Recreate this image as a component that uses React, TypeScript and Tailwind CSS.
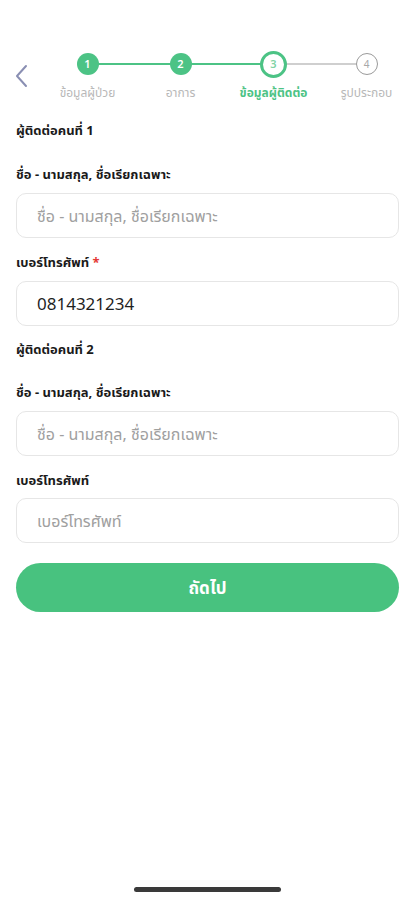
const font = { fontFamily: '"Noto Sans", "Noto Sans Thai", sans-serif' };

function Step({
  n,
  label,
  state,
  left,
  right,
}: {
  n: number;
  label: string;
  state: "done" | "active" | "todo";
  left?: "green" | "gray";
  right?: "green" | "gray";
}) {
  const lineColor = (c?: "green" | "gray") => (c === "green" ? "bg-[#4cc385]" : "bg-[#cfcfcf]");
  return (
    <div className="flex flex-col items-center">
      <div className="relative flex h-[28px] w-full items-center justify-center">
        {left && <div className={`absolute left-0 right-1/2 top-[13px] h-[2px] ${lineColor(left)}`} />}
        {right && <div className={`absolute left-1/2 right-0 top-[13px] h-[2px] ${lineColor(right)}`} />}
        {state === "done" && (
          <div className="relative z-10 flex h-[22px] w-[22px] items-center justify-center rounded-full bg-[#4cc385] text-[11px] font-semibold text-white">
            {n}
          </div>
        )}
        {state === "active" && (
          <div className="relative z-10 flex h-[27px] w-[27px] items-center justify-center rounded-full border-[3px] border-[#4cc385] bg-white text-[11px] font-semibold text-[#7fd3a4]">
            {n}
          </div>
        )}
        {state === "todo" && (
          <div className="relative z-10 flex h-[22px] w-[22px] items-center justify-center rounded-full border-[1.5px] border-[#9a9a9a] bg-white text-[10px] text-[#a8a8a8]">
            {n}
          </div>
        )}
      </div>
      <div
        className={`mt-[7px] whitespace-nowrap text-[12px] leading-[16px] ${
          state === "active" ? "font-bold text-[#4cc385]" : "text-[#b8b8b8]"
        }`}
      >
        {label}
      </div>
    </div>
  );
}

function Field({ placeholder, value }: { placeholder: string; value?: string }) {
  return (
    <div className="flex h-[45px] items-center rounded-[10px] border border-[#e6e6e6] bg-white pl-[20px]">
      {value ? (
        <span className="text-[17px] text-[#1f1f1f]">{value}</span>
      ) : (
        <span className="text-[16px] text-[#a0a0a0]">{placeholder}</span>
      )}
    </div>
  );
}

export default function App() {
  return (
    <div className="flex h-[900px] w-[415px] flex-col bg-white" style={font}>
      {/* stepper */}
      <div className="flex items-start pt-[50px]">
        <div className="flex w-[41px] justify-center pt-[14px]">
          <svg width="14" height="24" viewBox="0 0 14 24" fill="none">
            <path d="M12 2L3 12l9 10" stroke="#8a8fb3" strokeWidth="2" strokeLinecap="round" strokeLinejoin="round" />
          </svg>
        </div>
        <div className="grid w-[372px] grid-cols-4">
          <Step n={1} label="ข้อมูลผู้ป่วย" state="done" right="green" />
          <Step n={2} label="อาการ" state="done" left="green" right="green" />
          <Step n={3} label="ข้อมูลผู้ติดต่อ" state="active" left="green" right="gray" />
          <Step n={4} label="รูปประกอบ" state="todo" left="gray" />
        </div>
      </div>

      <div className="flex flex-col px-[16px]">
        <div className="mt-[19px] text-[13px] font-bold leading-[20px] text-[#1a1a1a]">ผู้ติดต่อคนที่ 1</div>
        <div className="mt-[24px] text-[13px] font-bold leading-[20px] text-[#1a1a1a]">ชื่อ - นามสกุล, ชื่อเรียกเฉพาะ</div>
        <div className="mt-[9px]">
          <Field placeholder="ชื่อ - นามสกุล, ชื่อเรียกเฉพาะ" />
        </div>
        <div className="mt-[14px] text-[13px] font-bold leading-[20px] text-[#1a1a1a]">
          เบอร์โทรศัพท์ <span className="text-[#e53935]">*</span>
        </div>
        <div className="mt-[9px]">
          <Field placeholder="เบอร์โทรศัพท์" value="0814321234" />
        </div>
        <div className="mt-[13px] text-[13px] font-bold leading-[20px] text-[#1a1a1a]">ผู้ติดต่อคนที่ 2</div>
        <div className="mt-[23px] text-[13px] font-bold leading-[20px] text-[#1a1a1a]">ชื่อ - นามสกุล, ชื่อเรียกเฉพาะ</div>
        <div className="mt-[9px]">
          <Field placeholder="ชื่อ - นามสกุล, ชื่อเรียกเฉพาะ" />
        </div>
        <div className="mt-[14px] text-[13px] font-bold leading-[20px] text-[#1a1a1a]">เบอร์โทรศัพท์</div>
        <div className="mt-[8px]">
          <Field placeholder="เบอร์โทรศัพท์" />
        </div>
        <button className="mt-[20px] flex h-[49px] items-center justify-center rounded-full bg-[#48c27f] text-[17px] font-bold text-white">
          ถัดไป
        </button>
      </div>

      <div className="mt-auto mb-[8px] flex justify-center">
        <div className="h-[5px] w-[147px] rounded-full bg-[#3a3a3a]" />
      </div>
    </div>
  );
}
